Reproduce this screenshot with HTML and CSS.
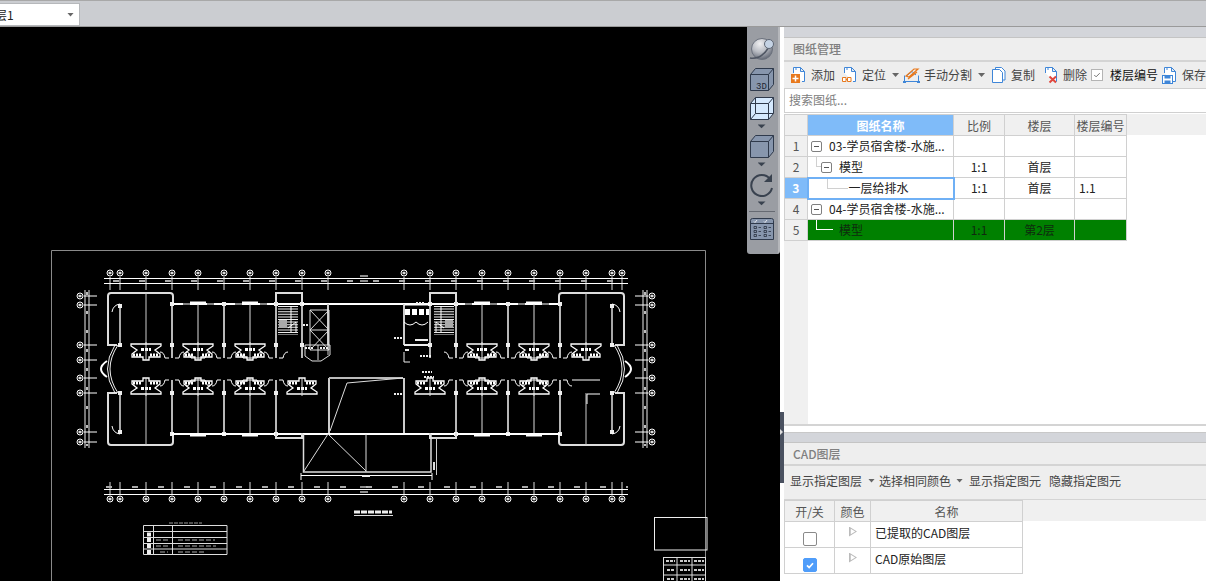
FILE: index.html
```html
<!DOCTYPE html>
<html lang="zh-CN">
<head>
    <meta charset="UTF-8">
    <title>图纸管理</title>
    <link rel="stylesheet" href="styles.css">
</head>
<body>
<div class="topbar">
    <div class="floor-select"><span class="floor-name">层1</span><i class="caret"></i></div>
</div>
<div class="main">
    <div class="canvas">
        <svg class="drawing" width="780" height="554" viewBox="0 27 780 554">
            <defs>
                <g id="bath" fill="none" stroke="#fff">
                    <path d="M-15 0H15V2L9 6 14 10V13H3V16H-3V13H-14V10L-9 6-15 2Z" stroke-width="1.300"/>
                    <path d="M-5 5.500H5" stroke-width="3" stroke-dasharray="3 1"/>
                    <path d="M-13 11H-4M4 11H13" stroke-width="3" stroke-dasharray="2 1"/>
                    <path d="M0 -2V16" stroke="#ddd"/>
                </g>
                <g id="col" fill="none">
                    <path d="M0 304V358" stroke="#b8b8b8" stroke-width="2"/>
                    <path d="M-2 304H2M-2 345H2" stroke="#eee" stroke-width="4"/>
                    <path d="M-12 352Q-8 352-7 358H-3M3 358H7Q8 352 12 352" stroke="#fff"/>
                </g>
                <g id="thin-col" fill="none">
                    <path d="M0 304V345" stroke="#ddd"/>
                    <path d="M-8 302.500H8" stroke="#fff" stroke-width="2"/>
                    <path d="M-12 352Q-8 352-7 358H7Q8 352 12 352" stroke="#fff"/>
                </g>
                <g id="quarter">
                    <path d="M173 304V296Q173 293 170 293H111Q108 293 108 296V345H117" fill="none" stroke="#ddd" stroke-width="2"/>
                    <path d="M120 306V345" stroke="#a8a8a8" stroke-width="2"/>
                    <path d="M118 306H122M118 345H122" stroke="#eee" stroke-width="4"/>
                    <path d="M120 304Q113 305 112 312" fill="none" stroke="#fff"/>
                    <path d="M146 293V345" stroke="#ccc"/>
                    <path d="M172 304H302" stroke="#fff" stroke-width="2"/>
                    <path d="M183 304H190M207 304H214M235 304H242M260 304H267" stroke="#000"/>
                    <use href="#col" x="172"/>
                    <use href="#thin-col" x="198"/>
                    <use href="#col" x="224"/>
                    <use href="#thin-col" x="250"/>
                    <use href="#col" x="276"/>
                    <use href="#bath" x="198" y="344"/>
                    <use href="#bath" x="250" y="344"/>
                </g>
                <g id="stair" fill="none">
                    <path d="M276 304V293H302V304" stroke="#ddd" stroke-width="2"/>
                    <path d="M288 306V335" stroke="#eee" stroke-width="20" stroke-dasharray="1 1.600"/>
                    <path d="M279 324H287" stroke="#aaa" stroke-width="8"/>
                    <path d="M291 306V332M296 332V322L288 328" stroke="#fff"/>
                    <path d="M302 304V358" stroke="#b8b8b8" stroke-width="2"/>
                    <path d="M300 304H304M300 345H304" stroke="#eee" stroke-width="4"/>
                </g>
                <g id="axis-x" fill="none">
                    <path d="M110 277V290M120 277V290M146 277V290M172 277V290M198 277V290M224 277V290M250 277V290M276 277V290M302 277V290M328 277V290"/>
                </g>
                <g id="bubble">
                    <circle r="3" fill="#000" stroke="#fff"/>
                    <path d="M-1.500 0H1.500" stroke="#ddd" stroke-width="2.500"/>
                </g>
                <g id="axis-y" fill="none" stroke="#fff">
                    <path d="M85 290V448M89 290V448" stroke="#eee"/>
                    <path d="M84 296H97M84 305H97M84 345H97M84 360H97M84 378H97M84 393H97M84 432H97M84 442H97"/>
                    <path d="M87 292V446" stroke-width="2" stroke-dasharray="3 16" stroke="#bbb"/>
                </g>
                <g id="half-marks">
                    <use href="#axis-y"/>
                    <use href="#bubble" x="80" y="296"/>
                    <use href="#bubble" x="80" y="305"/>
                    <use href="#bubble" x="80" y="345"/>
                    <use href="#bubble" x="80" y="360"/>
                    <use href="#bubble" x="80" y="378"/>
                    <use href="#bubble" x="80" y="393"/>
                    <use href="#bubble" x="80" y="432"/>
                    <use href="#bubble" x="80" y="442"/>
                    <use href="#bubble" x="110" y="273"/>
                    <use href="#bubble" x="120" y="273"/>
                    <use href="#bubble" x="146" y="273"/>
                    <use href="#bubble" x="172" y="273"/>
                    <use href="#bubble" x="198" y="273"/>
                    <use href="#bubble" x="224" y="273"/>
                    <use href="#bubble" x="250" y="273"/>
                    <use href="#bubble" x="276" y="273"/>
                    <use href="#bubble" x="302" y="273"/>
                    <use href="#bubble" x="328" y="273"/>
                    <use href="#bubble" x="110" y="499"/>
                    <use href="#bubble" x="120" y="499"/>
                    <use href="#bubble" x="146" y="499"/>
                    <use href="#bubble" x="172" y="499"/>
                    <use href="#bubble" x="198" y="499"/>
                    <use href="#bubble" x="224" y="499"/>
                    <use href="#bubble" x="250" y="499"/>
                    <use href="#bubble" x="276" y="499"/>
                    <use href="#bubble" x="302" y="499"/>
                    <use href="#bubble" x="328" y="499"/>
                    <path d="M118 345Q102 369 118 393M115 345Q100 369 115 393" fill="none" stroke="#eee"/>
                    <path d="M107 361Q95 369 107 377" fill="none" stroke="#fff" stroke-width="2"/>
                    <use href="#axis-x" stroke="#ddd"/>
                    <use href="#axis-x" stroke="#ddd" y="205"/>
                </g>
            </defs>

            <!-- sheet frame -->
            <path d="M51.500 581V250.500H705.500V581" fill="none" stroke="#8a8a8a"/>

            <!-- plan -->
            <use href="#quarter"/>
            <use href="#quarter" transform="translate(0 738) scale(1 -1)"/>
            <use href="#quarter" transform="translate(732 0) scale(-1 1)"/>
            <use href="#quarter" transform="translate(732 738) scale(-1 -1)"/>
            <use href="#stair"/>
            <use href="#stair" transform="translate(732 0) scale(-1 1)"/>
            <use href="#half-marks"/>
            <use href="#half-marks" transform="translate(732 0) scale(-1 1)"/>
            <use href="#bath" x="146" y="344"/>
            <use href="#bath" x="586" y="344"/>
            <use href="#bath" transform="translate(146 394) scale(1 -1)"/>
            <use href="#bath" transform="translate(302 394) scale(1 -1)"/>
            <use href="#bath" transform="translate(430 394) scale(1 -1)"/>
            <path d="M572 380H600M600 394H587V404" fill="none" stroke="#fff"/>

            <!-- dimension lines -->
            <path d="M104 278.500H628M104 283.500H628" stroke="#fff"/>
            <path d="M104 489.500H628M104 494.500H628" stroke="#fff"/>
            <path d="M113 281H628" stroke="#aaa" stroke-width="2" stroke-dasharray="6 20"/>
            <path d="M106 487H628" stroke="#aaa" stroke-width="2" stroke-dasharray="6 20"/>
            <path d="M360 276H368M360 281H368M360 487H368M360 492H368" stroke="#bbb" stroke-width="1.500"/>

            <!-- centre block -->
            <path d="M302 304H430" stroke="#fff" stroke-width="2"/>
            <path d="M328 304V345M404 304V345M404 378V433M329 378V433" stroke="#ccc" stroke-width="2"/>
            <path d="M328 345V355" stroke="#ccc"/>
            <path d="M329 378H403" stroke="#bbb" stroke-width="2"/>
            <path d="M330 431L347 383 403 378" fill="none" stroke="#ddd"/>
            <path d="M172 434H560" stroke="#fff" stroke-width="2"/>
            <path d="M276 433V438H302V433M430 433V438H456V433" fill="none" stroke="#ddd" stroke-width="2"/>

            <!-- lift shafts and small rooms -->
            <path d="M310 310H329V350H310ZM310 330H329M310 310L329 330M329 310L310 330M310 330L329 350M329 330L310 350" fill="none" stroke="#ddd"/>
            <path d="M305 345H330V355L321 361H312L305 356Z" fill="none" stroke="#ddd"/>
            <path d="M318 345V360" stroke="#ddd"/>
            <path d="M305 348H313M320 348H328M303 325H309" stroke="#eee" stroke-width="2" stroke-dasharray="2 1"/>
            <path d="M404 305H430M404 322Q410 328 416 322 422 328 428 322" fill="none" stroke="#fff"/>
            <path d="M405 312H429" stroke="#fff" stroke-width="6" stroke-dasharray="5 2"/>
            <path d="M404 345H430M415 340H428M405 350H409" stroke="#eee" stroke-width="2"/>
            <path d="M404 352V362H410" fill="none" stroke="#eee"/>
            <path d="M420 356H432M416 303H424M394 338H402M394 394H402" stroke="#eee" stroke-width="2" stroke-dasharray="2 1"/>
            <path d="M422 372H432M424 377H434" stroke="#eee" stroke-width="2" stroke-dasharray="2 1"/>

            <!-- atrium below the corridor -->
            <path d="M303.500 434V472H431V434" fill="none" stroke="#ddd" stroke-width="1.500"/>
            <path d="M301 475.500H432M301 473V480M432 473V480" fill="none" stroke="#fff"/>
            <path d="M436.500 438V475M433 438H440" fill="none" stroke="#ccc"/>
            <path d="M434 462V470" stroke="#ddd" stroke-width="2"/>
            <path d="M328 434L304 471M328 434L366 471M366 434V472" fill="none" stroke="#ddd"/>
            <path d="M362 476H370" stroke="#eee" stroke-width="2"/>

            <!-- legend table and sheet title -->
            <path d="M143.500 525.500H227V554.500H143.500ZM143.500 531.500H227M143.500 537.500H227M143.500 543.500H227M143.500 549H227M153.500 525V555M172.500 525V555" fill="none" stroke="#ddd"/>
            <path d="M169 523H202" stroke="#999" stroke-dasharray="4 1"/>
            <path d="M147 540H151M147 546H151M147 552H151M147 534.500H151" stroke="#eee" stroke-width="4"/>
            <path d="M178 540H215M178 546H216M178 552H205M156 540H168M156 546H168M160 552H168" stroke="#aaa" stroke-dasharray="5 2"/>
            <path d="M354 512H392" stroke="#eee" stroke-width="3" stroke-dasharray="6 1"/>
            <path d="M354 515.500H393" stroke="#ddd"/>

            <!-- title block -->
            <rect x="654.500" y="517.500" width="52.500" height="32.500" fill="none" stroke="#eee"/>
            <path d="M663.500 557.500H706M663.500 565H706M663.500 575H706M663.500 557V581M677 557V581M692 557V581M705.500 557V581" fill="none" stroke="#ddd"/>
            <path d="M666 561H675M680 561H690M694 561H704M667 570H674M680 570H690M694 570H704M667 579H674M680 579H690M694 579H704" stroke="#ccc" stroke-width="2" stroke-dasharray="3 1"/>
        </svg>

        <div class="view-tools">
            <svg class="tool-icon" viewBox="0 0 26 24">
                <defs>
                    <radialGradient id="ball" cx="40%" cy="25%" r="80%">
                        <stop offset="0" stop-color="#f0f0f2"/>
                        <stop offset=".5" stop-color="#b9bcc3"/>
                        <stop offset="1" stop-color="#5a606d"/>
                    </radialGradient>
                </defs>
                <circle cx="13" cy="12" r="10.500" fill="url(#ball)" stroke="#6b717d"/>
                <path d="M1 21Q12 23 20 10" fill="none" stroke="#4f5663" stroke-width="1.500"/>
                <circle cx="20" cy="7" r="4.500" fill="#c5d3e4" stroke="#5f6775"/>
            </svg>
            <svg class="tool-icon mt6" viewBox="0 0 26 24">
                <path d="M1.500 7.500L6.500 1.500H24.500V17.500L19.500 23.500H1.500ZM1.500 7.500H19.500V23.500M19.500 7.500L24.500 1.500" fill="#8796ad" stroke="#2f3a4c"/>
                <text class="cube-label" x="7" y="21.500">3D</text>
            </svg>
            <svg class="tool-icon mt5" viewBox="0 0 26 24">
                <path d="M1.500 7.500L6.500 1.500H24.500V17.500L19.500 23.500H1.500Z" fill="#d5e9fe" stroke="#2f3a4c"/>
                <path d="M1.500 7.500H19.500V23.500M19.500 7.500L24.500 1.500M6.500 1.500V17.500H24.500M6.500 17.500L1.500 23.500" fill="none" stroke="#2f3a4c"/>
            </svg>
            <i class="tool-caret"></i>
            <svg class="tool-icon mt2" viewBox="0 0 26 24">
                <path d="M1.500 7.500L6.500 1.500H24.500V17.500L19.500 23.500H1.500ZM1.500 7.500H19.500V23.500M19.500 7.500L24.500 1.500" fill="#8796ad" stroke="#2f3a4c"/>
            </svg>
            <i class="tool-caret"></i>
            <svg class="tool-icon mt3" viewBox="0 0 26 24">
                <path d="M21 6A10.500 10.500 0 1 0 23 15" fill="none" stroke="#39424f" stroke-width="2"/>
                <path d="M23 1V9H15Z" fill="#39424f"/>
            </svg>
            <i class="tool-caret"></i>
            <div class="tool-sep"></div>
            <svg class="tool-icon mt5" viewBox="0 0 26 24">
                <path d="M1.500 3.500Q1.500 1.500 3.500 1.500H22.500Q24.500 1.500 24.500 3.500V22.500H1.500Z" fill="#8796ad" stroke="#2f3a4c"/>
                <path d="M1.500 6.500H24.500" stroke="#2f3a4c"/>
                <path d="M5 4.500L6 5.500 8 3M15 4.500L16 5.500 18 3" fill="none" stroke="#fff" stroke-width=".8"/>
                <path d="M5 9.500H7.500V11.500H5ZM9.500 10.500H12M5 13.500H7.500V15.500H5ZM9.500 14.500H12M5 17.500H7.500V19.500H5ZM9.500 18.500H12M15 9.500H17.500V11.500H15ZM19.500 10.500H22M15 13.500H17.500V15.500H15ZM19.500 14.500H22M15 17.500H17.500V19.500H15ZM19.500 18.500H22" fill="none" stroke="#1e2733" stroke-width=".7"/>
            </svg>
        </div>
        <div class="splitter"><i></i></div>
    </div>

    <div class="side">
        <section class="panel-top">
            <div class="strip"></div>
            <h2 class="panel-title">图纸管理</h2>
            <div class="tools">
                <svg class="doc-icon ml7" viewBox="0 0 15 18"><use href="#page"/><rect x="0" y="8" width="9" height="9" fill="#e8791d"/><path d="M4.500 9.500V15.500M1.500 12.500H7.500" stroke="#fff" stroke-width="1.500"/></svg>
                <span class="tool-text">添加</span>
                <svg class="doc-icon ml7" viewBox="0 0 15 18"><use href="#page"/><path d="M.5 11.500H4V15.500H.5ZM5.500 11.500H9V15.500H5.500ZM4 13.500H5.500" fill="#fff" stroke="#e8791d"/></svg>
                <span class="tool-text">定位</span>
                <i class="caret ml6"></i>
                <svg class="doc-icon wide ml4" viewBox="0 0 17 18">
                    <path d="M1.500 9.500V15.500H15.500V9.500M4 9.500L9 5.500 13 9" fill="none" stroke="#3f86d8"/>
                    <path d="M3 10L11 3H15L6 11ZM5 13L14 6" fill="none" stroke="#e8791d" stroke-width="1.200"/>
                    <path d="M0 15H3V17H0ZM14 15H17V17H14Z" fill="#3f86d8"/>
                </svg>
                <span class="tool-text ml4">手动分割</span>
                <i class="caret ml6"></i>
                <svg class="doc-icon ml6" viewBox="0 0 15 18"><path d="M4.500 3.500V1.500H10.500L14 5V14H12M1.500 3.500H8.500L11.500 6.500V16.500H1.500Z" fill="#fff" stroke="#3f86d8"/></svg>
                <span class="tool-text">复制</span>
                <svg class="doc-icon ml8" viewBox="0 0 15 18"><use href="#page"/><path d="M6.500 10.500L13 16.500M13 10.500L6.500 16.500" stroke="#e0483e" stroke-width="2"/></svg>
                <span class="tool-text">删除</span>
                <span class="tiny-check"><svg viewBox="0 0 11 11"><path d="M2.500 5.500L4.500 7.500 8.500 3.500" fill="none" stroke="#666"/></svg></span>
                <span class="tool-text dark ml7">楼层编号</span>
                <svg class="doc-icon ml4" viewBox="0 0 15 18"><use href="#page"/><rect x=".5" y="9.500" width="10" height="8" fill="#fff" stroke="#3f86d8"/><rect x="2.500" y="9.500" width="6" height="3" fill="#3f86d8"/><rect x="2.500" y="14.500" width="6" height="3" fill="#3f86d8"/></svg>
                <span class="tool-text">保存</span>
            </div>
            <svg class="sprite" width="0" height="0"><defs>
                <path id="page" d="M2.500 7V1.500H9.500L13.500 5.500V15.500H11M9.500 1.500V5.500H13.500M5 1.500V4" fill="#fff" stroke="#3f86d8"/>
            </defs></svg>
            <div class="search">搜索图纸...</div>
            <div class="sheet-grid">
                <table class="grid sheets">
                    <tr class="head">
                        <th class="no"></th>
                        <th class="name-head">图纸名称</th>
                        <th class="c-scale">比例</th>
                        <th class="c-floor">楼层</th>
                        <th class="c-num">楼层编号</th>
                    </tr>
                    <tr>
                        <td class="no">1</td>
                        <td class="tree lv0"><span class="expander"></span>03-学员宿舍楼-水施...</td>
                        <td></td><td></td><td></td>
                    </tr>
                    <tr>
                        <td class="no">2</td>
                        <td class="tree lv1"><span class="link link-a"></span><span class="expander"></span>模型</td>
                        <td class="mid">1:1</td><td class="mid">首层</td><td></td>
                    </tr>
                    <tr>
                        <td class="no no-on">3</td>
                        <td class="tree lv2 cell-on"><span class="link link-b"></span>一层给排水</td>
                        <td class="mid">1:1</td><td class="mid">首层</td><td class="code">1.1</td>
                    </tr>
                    <tr>
                        <td class="no">4</td>
                        <td class="tree lv0"><span class="expander"></span>04-学员宿舍楼-水施...</td>
                        <td></td><td></td><td></td>
                    </tr>
                    <tr class="row-green">
                        <td class="no">5</td>
                        <td class="tree lv1"><span class="link link-c"></span>模型</td>
                        <td class="mid">1:1</td><td class="mid">第2层</td><td></td>
                    </tr>
                </table>
            </div>
        </section>

        <section class="panel-bottom">
            <div class="strip"></div>
            <h2 class="panel-title">CAD图层</h2>
            <div class="tools tools-cad">
                <span class="tool-text">显示指定图层</span>
                <i class="caret ml6"></i>
                <span class="tool-text ml4">选择相同颜色</span>
                <i class="caret ml5"></i>
                <span class="tool-text ml6">显示指定图元</span>
                <span class="tool-text ml8">隐藏指定图元</span>
            </div>
            <div class="layer-grid">
                <table class="grid layers">
                    <tr class="head">
                        <th class="c-switch">开/关</th>
                        <th class="c-color">颜色</th>
                        <th class="c-name">名称</th>
                    </tr>
                    <tr>
                        <td class="mid"><span class="check"></span></td>
                        <td class="mid"><span class="swatch"></span></td>
                        <td class="layer-name">已提取的CAD图层</td>
                    </tr>
                    <tr>
                        <td class="mid"><span class="check checked"><svg viewBox="0 0 14 14"><path d="M3.500 7.500L6 10 10.500 5" fill="none" stroke="#fff" stroke-width="2"/></svg></span></td>
                        <td class="mid"><span class="swatch"></span></td>
                        <td class="layer-name">CAD原始图层</td>
                    </tr>
                </table>
            </div>
        </section>
    </div>
</div>
</body>
</html>
```

FILE: styles.css
```css
* {
    margin: 0;
    padding: 0;
    box-sizing: border-box;
}

html, body {
    height: 581px;
    overflow: hidden;
}

body {
    font-family: "Noto Sans CJK SC", "Noto Sans", sans-serif;
    font-size: 12px;
    color: #333;
    background-color: #fff;
}

.topbar {
    height: 27px;
    padding-top: 2px;
    background-color: #cbcdd1;
    border-top: 1px solid #a8a8a8;
    border-bottom: 1px solid #9a9a9a;
}

.floor-select {
    width: 80px;
    height: 23px;
    display: flex;
    align-items: center;
    justify-content: space-between;
    padding-right: 5px;
    background-color: #fff;
    border: 1px solid #b6b8bb;
    border-left: 0;
    overflow: hidden;
}

.floor-name {
    margin-left: -5px;
    color: #222;
    white-space: nowrap;
}

.caret {
    display: block;
    flex: none;
    width: 7px;
    height: 4px;
    background-color: #666;
    clip-path: polygon(0 0, 100% 0, 50% 100%);
}

.main {
    display: flex;
    height: 554px;
}

.canvas {
    position: relative;
    flex: none;
    width: 780px;
    background-color: #000;
}

.drawing {
    display: block;
}

.view-tools {
    position: absolute;
    left: 747px;
    top: 0;
    width: 33px;
    height: 227px;
    display: flex;
    flex-direction: column;
    align-items: center;
    padding: 10px 2px 0 0;
    background-color: #9a9da3;
    border-right: 2px solid #b5b7bb;
    border-radius: 0 0 3px 3px;
}

.tool-icon {
    display: block;
    flex: none;
    width: 26px;
    height: 24px;
}

.cube-label {
    font-family: "Liberation Mono", monospace;
    font-size: 9px;
    fill: #1e2733;
}

.tool-caret {
    display: block;
    flex: none;
    width: 8px;
    height: 12px;
    background-color: #39424f;
    clip-path: polygon(0 38%, 100% 38%, 50% 68%);
}

.tool-sep {
    flex: none;
    width: 26px;
    height: 1px;
    margin-top: 2px;
    background-color: #666a72;
}

.mt2 { margin-top: 2px; }
.mt3 { margin-top: 3px; }
.mt5 { margin-top: 5px; }
.mt6 { margin-top: 6px; }

.splitter {
    position: absolute;
    left: 780px;
    top: 385px;
    width: 4px;
    height: 71px;
    padding-top: 17px;
    background-color: #4a5160;
}

.splitter i {
    display: block;
    width: 3px;
    height: 6px;
    background-color: #ddd;
    clip-path: polygon(0 0, 100% 50%, 0 100%);
}

.side {
    flex: 1;
    min-width: 0;
    display: flex;
    flex-direction: column;
    padding-left: 4px;
    background-color: #fff;
}

.strip {
    height: 11px;
    background-color: #d3d5da;
    border-bottom: 1px solid #c4c4c4;
}

.panel-top {
    flex: none;
    height: 405px;
}

.panel-bottom {
    flex: none;
    height: 149px;
    overflow: hidden;
}

.panel-bottom .strip {
    border-top: 1px solid #c8c8c8;
}

.panel-title {
    height: 24px;
    line-height: 22px;
    padding-left: 9px;
    font-size: 12px;
    font-weight: 500;
    color: #808080;
    background-color: #eee;
    border-bottom: 2px solid #d4d4d4;
}

.panel-bottom .panel-title {
    height: 23px;
}

.tools {
    display: flex;
    align-items: center;
    height: 26px;
    overflow: hidden;
    white-space: nowrap;
    background-color: #eee;
}

.tools > * {
    flex: none;
}

.tools-cad {
    height: 33px;
    padding: 0 0 4px 6px;
}

.tool-text {
    margin-left: 5px;
    line-height: 26px;
    color: #444;
}

.tools-cad .tool-text:first-child {
    margin-left: 0;
}

.tool-text.dark {
    color: #111;
}

.tool-text.ml4 { margin-left: 4px; }
.tool-text.ml6 { margin-left: 6px; }
.tool-text.ml7 { margin-left: 7px; }
.tool-text.ml8 { margin-left: 8px; }

.doc-icon {
    display: block;
    width: 15px;
    height: 18px;
}

.doc-icon.wide {
    width: 17px;
}

.caret.ml5 { margin-left: 5px; }
.caret.ml6 { margin-left: 6px; }
.doc-icon.ml4 { margin-left: 4px; }
.doc-icon.ml6 { margin-left: 6px; }
.doc-icon.ml7 { margin-left: 7px; }
.doc-icon.ml8 { margin-left: 8px; }

.tiny-check {
    display: block;
    width: 12px;
    height: 12px;
    margin-left: 4px;
    background-color: #fff;
    border: 1px solid #b4b4b4;
}

.tiny-check svg {
    display: block;
    width: 10px;
    height: 10px;
}

.sprite {
    position: absolute;
}

.search {
    height: 25px;
    line-height: 21px;
    padding-left: 4px;
    color: #808080;
    background-color: #fff;
    border: 1px solid #d0d0d0;
    border-right: 0;
}

.sheet-grid {
    height: 312px;
    margin-top: 1px;
    border-bottom: 2px solid #d4d4d4;
    background:
        linear-gradient(#f0f0f0, #f0f0f0) left top / 100% 21px no-repeat,
        linear-gradient(#f0f0f0, #f0f0f0) left top / 24px 100% no-repeat,
        #fff;
}

.grid {
    border-collapse: collapse;
    table-layout: fixed;
}

.grid th, .grid td {
    border: 1px solid #d0d0d0;
    font-weight: 400;
    white-space: nowrap;
    overflow: hidden;
}

.grid th {
    color: #555;
    background-color: #f0f0f0;
    text-align: center;
}

.sheets {
    width: 342px;
}

.sheets tr {
    height: 21px;
}

.sheets td {
    color: #222;
    padding-bottom: 1px;
}

.sheets td.no {
    text-align: center;
    color: #555;
    background-color: #f0f0f0;
}

.sheets th.no {
    width: 23px;
}

.grid th.name-head {
    width: 146px;
    color: #fff;
    font-weight: 700;
    background-color: #7fbbf9;
}

.c-scale { width: 51px; }
.c-floor { width: 70px; }
.c-num { width: 52px; }

.mid {
    text-align: center;
}

.code {
    padding-left: 4px;
}

.tree {
    position: relative;
    overflow: visible;
}

.lv0 { padding-left: 3px; }
.lv1 { padding-left: 13px; }
.lv2 { padding-left: 40px; }
.lv1:not(:has(.expander)) { padding-left: 31px; }

.expander {
    display: inline-block;
    position: relative;
    width: 11px;
    height: 11px;
    margin-right: 7px;
    vertical-align: -1px;
    background-color: #fff;
    border: 1px solid #808080;
    border-radius: 2px;
}

.expander::after {
    content: "";
    position: absolute;
    left: 2px;
    top: 4px;
    width: 5px;
    height: 1px;
    background-color: #555;
}

.link {
    position: absolute;
    border-left: 1px solid #d0d0d0;
    border-bottom: 1px solid #d0d0d0;
}

.link-a {
    left: 8px;
    top: -5px;
    width: 5px;
    height: 15px;
}

.link-b {
    left: 18px;
    top: -5px;
    width: 21px;
    height: 15px;
}

.link-c {
    left: 8px;
    top: -5px;
    width: 17px;
    height: 15px;
    border-color: #fff;
}

.sheets td.no-on {
    color: #fff;
    font-weight: 700;
    background-color: #7fbbf9;
}

.sheets td.cell-on {
    border: 2px solid #6fb0f5;
}

.row-green td {
    background-color: #008000;
    color: #0f2a0f;
}

.sheets .row-green td.no {
    color: #555;
}

.layer-grid {
    height: 82px;
    background: linear-gradient(#f0f0f0, #f0f0f0) left top / 100% 21px no-repeat, #fff;
    border-top: 1px solid #d4d4d4;
}

.layers {
    width: 238px;
}

.layers tr {
    height: 26px;
}

.layers tr.head {
    height: 21px;
}

.layers td {
    color: #222;
}

.layers td.layer-name {
    padding: 0 0 4px 4px;
}

.c-switch { width: 50px; }
.c-color { width: 36px; }
.c-name { width: 152px; }

.check {
    display: block;
    width: 14px;
    height: 14px;
    margin: 8px 0 0 18px;
    background-color: #fff;
    border: 1px solid #8a8a8a;
    border-radius: 2px;
}

.check.checked {
    background-color: #4f9dfa;
    border-color: #4f9dfa;
}

.check svg {
    display: block;
    width: 12px;
    height: 12px;
}

.swatch {
    display: block;
    width: 8px;
    height: 10px;
    margin: -6px 0 0 14px;
    background-color: #bbb;
    clip-path: polygon(0 0, 100% 50%, 0 100%, 0 0, 22% 22%, 22% 78%, 78% 50%, 22% 22%);
}
```
